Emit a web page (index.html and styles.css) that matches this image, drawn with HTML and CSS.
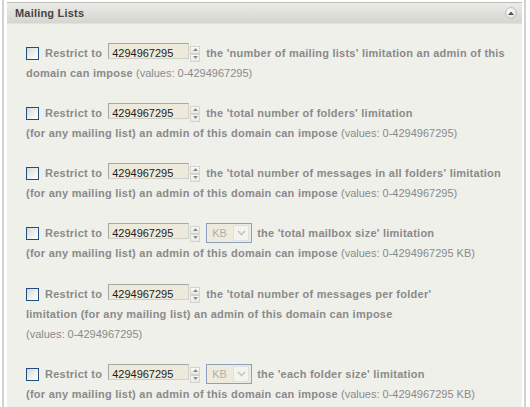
FILE: index.html
```html
<!DOCTYPE html>
<html>
<head>
<meta charset="utf-8">
<title>Mailing Lists</title>
<link rel="stylesheet" href="styles.css">
</head>
<body>
<div class="frame">
  <div class="panel">
    <div class="panel-head">
      <span class="panel-title">Mailing Lists</span>
      <span class="collapse" aria-label="Collapse">
        <svg width="6" height="4" viewBox="0 0 6 4"><path d="M0 4 L3 0.5 L6 4 Z" fill="#555"/></svg>
      </span>
    </div>
    <div class="panel-body">
      <div class="opt">
        <input type="checkbox" class="chk"><span class="lbl">Restrict to</span><input class="num" type="text" value="4294967295" readonly><span class="spin"><span class="spin-btn"><svg width="5" height="3" viewBox="0 0 5 3"><path d="M0 3 L2.5 0 L5 3 Z" fill="#8a8a8a"/></svg></span><span class="spin-btn"><svg width="5" height="3" viewBox="0 0 5 3"><path d="M0 0 L2.5 3 L5 0 Z" fill="#8a8a8a"/></svg></span></span><span class="lbl">the 'number of mailing lists' limitation an admin of this</span><br><span class="txt">domain can impose</span> <span class="hint">(values: 0-4294967295)</span>
      </div>
      <div class="opt">
        <input type="checkbox" class="chk"><span class="lbl">Restrict to</span><input class="num" type="text" value="4294967295" readonly><span class="spin"><span class="spin-btn"><svg width="5" height="3" viewBox="0 0 5 3"><path d="M0 3 L2.5 0 L5 3 Z" fill="#8a8a8a"/></svg></span><span class="spin-btn"><svg width="5" height="3" viewBox="0 0 5 3"><path d="M0 0 L2.5 3 L5 0 Z" fill="#8a8a8a"/></svg></span></span><span class="lbl">the 'total number of folders' limitation</span><br><span class="txt">(for any mailing list) an admin of this domain can impose</span> <span class="hint">(values: 0-4294967295)</span>
      </div>
      <div class="opt">
        <input type="checkbox" class="chk"><span class="lbl">Restrict to</span><input class="num" type="text" value="4294967295" readonly><span class="spin"><span class="spin-btn"><svg width="5" height="3" viewBox="0 0 5 3"><path d="M0 3 L2.5 0 L5 3 Z" fill="#8a8a8a"/></svg></span><span class="spin-btn"><svg width="5" height="3" viewBox="0 0 5 3"><path d="M0 0 L2.5 3 L5 0 Z" fill="#8a8a8a"/></svg></span></span><span class="lbl">the 'total number of messages in all folders' limitation</span><br><span class="txt">(for any mailing list) an admin of this domain can impose</span> <span class="hint">(values: 0-4294967295)</span>
      </div>
      <div class="opt">
        <input type="checkbox" class="chk"><span class="lbl">Restrict to</span><input class="num" type="text" value="4294967295" readonly><span class="spin"><span class="spin-btn"><svg width="5" height="3" viewBox="0 0 5 3"><path d="M0 3 L2.5 0 L5 3 Z" fill="#8a8a8a"/></svg></span><span class="spin-btn"><svg width="5" height="3" viewBox="0 0 5 3"><path d="M0 0 L2.5 3 L5 0 Z" fill="#8a8a8a"/></svg></span></span><span class="select"><span class="select-val">KB</span><span class="select-btn"><svg width="9" height="6" viewBox="0 0 9 6"><path d="M1 1 L4.5 4.5 L8 1" fill="none" stroke="#c4c4c4" stroke-width="1.6"/></svg></span></span><span class="lbl">the 'total mailbox size' limitation</span><br><span class="txt">(for any mailing list) an admin of this domain can impose</span> <span class="hint">(values: 0-4294967295 KB)</span>
      </div>
      <div class="opt">
        <input type="checkbox" class="chk"><span class="lbl">Restrict to</span><input class="num" type="text" value="4294967295" readonly><span class="spin"><span class="spin-btn"><svg width="5" height="3" viewBox="0 0 5 3"><path d="M0 3 L2.5 0 L5 3 Z" fill="#8a8a8a"/></svg></span><span class="spin-btn"><svg width="5" height="3" viewBox="0 0 5 3"><path d="M0 0 L2.5 3 L5 0 Z" fill="#8a8a8a"/></svg></span></span><span class="lbl">the 'total number of messages per folder'</span><br><span class="txt">limitation (for any mailing list) an admin of this domain can impose</span><br><span class="hint">(values: 0-4294967295)</span>
      </div>
      <div class="opt">
        <input type="checkbox" class="chk"><span class="lbl">Restrict to</span><input class="num" type="text" value="4294967295" readonly><span class="spin"><span class="spin-btn"><svg width="5" height="3" viewBox="0 0 5 3"><path d="M0 3 L2.5 0 L5 3 Z" fill="#8a8a8a"/></svg></span><span class="spin-btn"><svg width="5" height="3" viewBox="0 0 5 3"><path d="M0 0 L2.5 3 L5 0 Z" fill="#8a8a8a"/></svg></span></span><span class="select"><span class="select-val">KB</span><span class="select-btn"><svg width="9" height="6" viewBox="0 0 9 6"><path d="M1 1 L4.5 4.5 L8 1" fill="none" stroke="#c4c4c4" stroke-width="1.6"/></svg></span></span><span class="lbl">the 'each folder size' limitation</span><br><span class="txt">(for any mailing list) an admin of this domain can impose</span> <span class="hint">(values: 0-4294967295 KB)</span>
      </div>
    </div>
  </div>
</div>
</body>
</html>
```

FILE: styles.css
```css
html, body {
  margin: 0;
  padding: 0;
  background: #ffffff;
  height: 100%;
  overflow: hidden;
}

body {
  font-family: "Liberation Sans", Arial, sans-serif;
  font-size: 11px;
}

.frame {
  margin: 0 4px 0 2px;
  border-left: 2px solid #d2d2d2;
  border-right: 2px solid #d2d2d2;
  padding: 2px 2px 0 3px;
  min-height: 420px;
  box-sizing: border-box;
}

.panel {
  background: #f0f0eb;
  min-height: 420px;
}

.panel-head {
  display: flex;
  align-items: center;
  justify-content: space-between;
  height: 20px;
  border-top: 1px solid #bdbdb8;
  border-bottom: 1px solid #e2e2dd;
  background: linear-gradient(#ebebe7, #d6d6d0);
  padding: 0 5px 0 8px;
}

.panel-title {
  font-weight: bold;
  color: #454545;
  line-height: 20px;
  letter-spacing: 0.2px;
}

.collapse {
  width: 12px;
  height: 12px;
  box-sizing: border-box;
  border-radius: 50%;
  border: 1px solid #c2c2bd;
  background: radial-gradient(circle at 40% 35%, #ffffff, #e4e4e0 70%, #d0d0cb);
  display: flex;
  align-items: center;
  justify-content: center;
}

.panel-body {
  padding: 19px 10px 0 19px;
}

.opt {
  line-height: 20px;
  white-space: nowrap;
  color: #8a8a8a;
  margin-bottom: 20px;
}

.opt:nth-child(5) {
  margin-top: 21px;
}

.lbl, .txt {
  font-weight: bold;
  letter-spacing: 0.25px;
}

.hint {
  font-weight: normal;
}

.chk {
  appearance: none;
  -webkit-appearance: none;
  margin: 0 6px 0 0;
  width: 13px;
  height: 13px;
  box-sizing: border-box;
  border: 1px solid #1e4f7e;
  background: linear-gradient(135deg, #d8d8d3, #f8f8f6 75%, #ffffff);
  vertical-align: -3px;
}

.num {
  font-family: "Liberation Sans", Arial, sans-serif;
  font-size: 11px;
  color: #222;
  width: 81px;
  height: 16px;
  box-sizing: border-box;
  margin: 0 0 0 6px;
  padding: 4px 3px 0 3px;
  border: 1px solid #a8a8a2;
  border-right-color: #d0d0ca;
  border-bottom-color: #d0d0ca;
  background: #edeadb;
  outline: none;
}

.spin {
  display: inline-block;
  width: 10px;
  height: 16px;
  margin: 0 6px 0 1px;
  vertical-align: -2px;
}

.spin-btn {
  display: flex;
  align-items: center;
  justify-content: center;
  height: 8px;
  box-sizing: border-box;
  border: 1px solid #d4d4cf;
  background: linear-gradient(#fbfbfa, #e8e8e4);
}

.select {
  display: inline-flex;
  align-items: center;
  width: 46px;
  height: 20px;
  box-sizing: border-box;
  border: 1px solid #8aa0bc;
  background: #eeebdd;
  margin-right: 5px;
  vertical-align: baseline;
  padding: 0 2px 0 5px;
  line-height: 16px;
}

.select-val {
  flex: 1;
  font-weight: normal;
  color: #b0b0aa;
  line-height: 16px;
}

.select-btn {
  width: 16px;
  height: 16px;
  box-sizing: border-box;
  border: 1px solid #e0e0dc;
  background: #f3f3f0;
  display: flex;
  align-items: center;
  justify-content: center;
}
```
